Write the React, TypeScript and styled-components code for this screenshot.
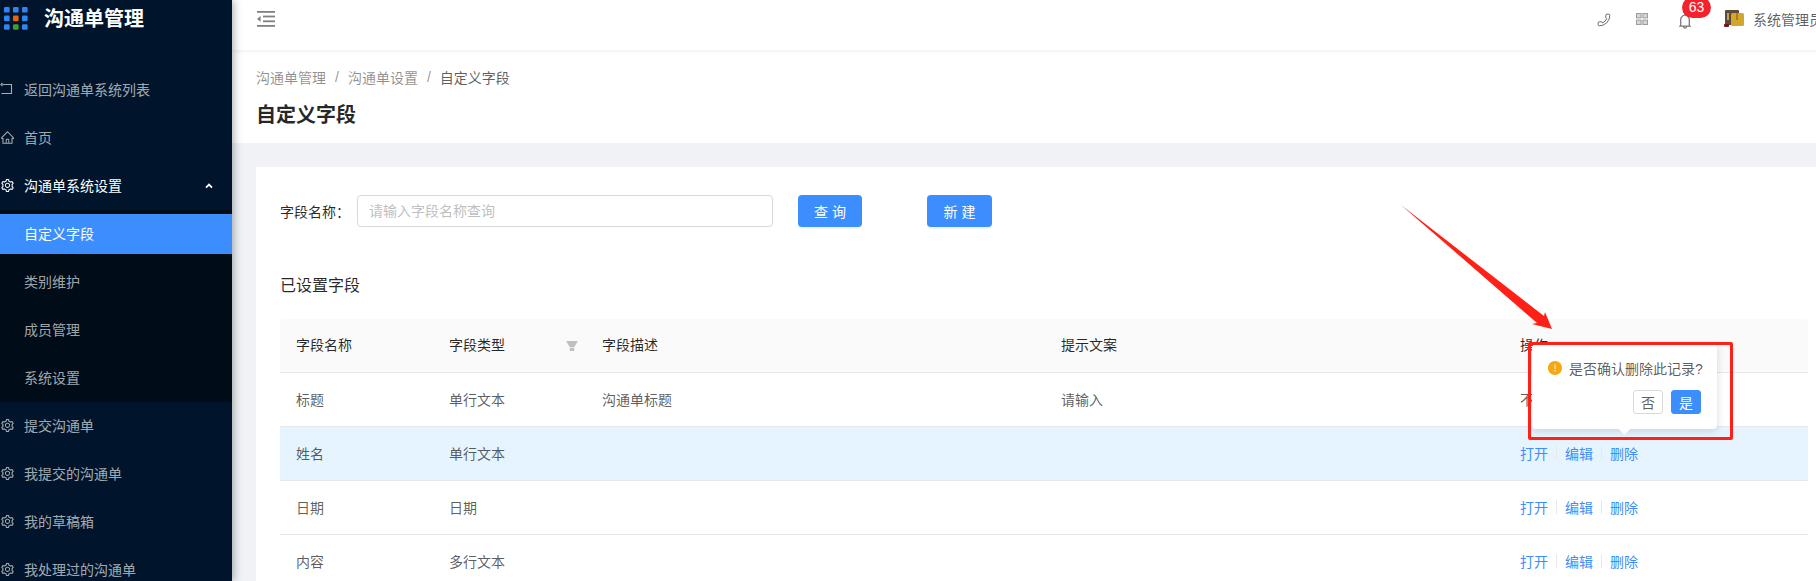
import React from 'react';
import styled, { createGlobalStyle } from 'styled-components';
import {
  AiOutlineHome,
  AiOutlineSetting,
  AiOutlineBell,
  AiFillFilter,
  AiFillExclamationCircle,
} from 'react-icons/ai';
import { Phone } from 'lucide-react';

const FONT = `"Liberation Sans", "Noto Sans CJK SC", sans-serif`;
const BLUE = '#3c8eff';

const GlobalStyle = createGlobalStyle`
  html, body {
    margin: 0;
    padding: 0;
    background: #fff;
    font-family: ${FONT};
  }
  * { box-sizing: border-box; }
`;

const rows = [
  { name: '标题', type: '单行文本', desc: '沟通单标题', hint: '请输入', locked: true },
  { name: '姓名', type: '单行文本', desc: '', hint: '', active: true },
  { name: '日期', type: '日期', desc: '', hint: '' },
  { name: '内容', type: '多行文本', desc: '', hint: '' },
];

const LogoMark = () => (
  <svg width="24" height="24" viewBox="0 0 24 24">
    {[0, 1, 2].map((r) =>
      [0, 1, 2].map((c) => {
        let fill = '#2f86f0';
        if (r === 1 && c === 1) fill = '#e8650f';
        if (r === 2 && c === 1) fill = '#3f9c35';
        return <rect key={`${r}${c}`} x={c * 9} y={r * 8.6} width="5.6" height="5.6" rx="1.2" fill={fill} />;
      })
    )}
  </svg>
);

const BackIcon = () => (
  <svg width="14" height="14" viewBox="0 0 14 14" fill="none" stroke="currentColor" strokeWidth="1.1">
    <path d="M2.5 2.5H11.5V11.5H1.5" />
    <path d="M2.5 1L1 2.5L2.5 4" />
  </svg>
);

const CollapseIcon = () => (
  <svg width="18" height="16" viewBox="0 0 18 16" fill="#808080">
    <rect x="0" y="0" width="18" height="1.8" />
    <rect x="6" y="4.6" width="12" height="1.8" />
    <rect x="6" y="9.4" width="12" height="1.8" />
    <rect x="0" y="14" width="18" height="1.8" />
    <path d="M3.6 5V10.8L0 7.9Z" />
  </svg>
);

const GridIcon = () => (
  <svg width="12" height="12" viewBox="0 0 12 12" fill="#d6d6d6" stroke="#9c9c9c" strokeWidth="1">
    <rect x=".5" y=".5" width="4.6" height="4.4" />
    <rect x="6.9" y=".5" width="4.6" height="4.4" />
    <rect x=".5" y="7.1" width="4.6" height="4.4" />
    <rect x="6.9" y="7.1" width="4.6" height="4.4" />
  </svg>
);

const AvatarIcon = () => (
  <svg width="20" height="18" viewBox="0 0 20 18">
    <rect x="1" y="0" width="14" height="15" rx="1" fill="#5c4a3a" />
    <rect x="3" y="3" width="2" height="7" fill="#c9a24a" />
    <rect x="7" y="3" width="13" height="13" rx="1.5" fill="#d3a62d" />
    <rect x="12" y="3" width="2" height="7" fill="#a87f1c" />
    <rect x="0" y="14" width="5" height="3" rx="1" fill="#7a1212" />
  </svg>
);

const App: React.FC = () => {
  return (
    <Page>
      <GlobalStyle />
      <Sidebar>
        <Logo>
          <LogoMark />
          <LogoText>沟通单管理</LogoText>
        </Logo>
        <MenuItem>
          <MenuIcon><BackIcon /></MenuIcon>
          返回沟通单系统列表
        </MenuItem>
        <MenuItem>
          <MenuIcon><AiOutlineHome size={15} /></MenuIcon>
          首页
        </MenuItem>
        <MenuItem $open>
          <MenuIcon><AiOutlineSetting size={15} /></MenuIcon>
          沟通单系统设置
          <Chevron viewBox="0 0 8 6" width="8" height="6">
            <path d="M1 4.6L4 1.6L7 4.6" fill="none" stroke="#fff" strokeWidth="1.8" />
          </Chevron>
        </MenuItem>
        <SubMenu>
          <SubItem $selected>自定义字段</SubItem>
          <SubItem>类别维护</SubItem>
          <SubItem>成员管理</SubItem>
          <SubItem>系统设置</SubItem>
        </SubMenu>
        {['提交沟通单', '我提交的沟通单', '我的草稿箱', '我处理过的沟通单'].map((label) => (
          <MenuItem key={label}>
            <MenuIcon><AiOutlineSetting size={15} /></MenuIcon>
            {label}
          </MenuItem>
        ))}
      </Sidebar>

      <Main>
        <TopBar>
          <CollapseIcon />
          <TopRight>
            <PhoneWrap><Phone size={14} strokeWidth={1.5} color="#555" /></PhoneWrap>
            <TopItem $gap={25}><GridIcon /></TopItem>
            <BellWrap>
              <AiOutlineBell size={18} color="#777" />
              <Badge>63</Badge>
            </BellWrap>
            <TopItem $gap={30}><AvatarIcon /></TopItem>
            <UserName>系统管理员</UserName>
          </TopRight>
        </TopBar>

        <PageHead>
          <Breadcrumb>
            <span>沟通单管理</span>
            <Slash>/</Slash>
            <span>沟通单设置</span>
            <Slash>/</Slash>
            <CurrentCrumb>自定义字段</CurrentCrumb>
          </Breadcrumb>
          <PageTitle>自定义字段</PageTitle>
        </PageHead>

        <Content>
          <Card>
            <FilterRow>
              <FilterLabel>字段名称：</FilterLabel>
              <SearchInput placeholder="请输入字段名称查询" />
              <PrimaryButton $left={25} $width={64}>查 询</PrimaryButton>
              <PrimaryButton $left={65} $width={65}>新 建</PrimaryButton>
            </FilterRow>
            <SectionTitle>已设置字段</SectionTitle>
            <TableWrap>
              <FieldTable>
                <colgroup>
                  <col style={{ width: 153 }} />
                  <col style={{ width: 153 }} />
                  <col style={{ width: 459 }} />
                  <col style={{ width: 459 }} />
                  <col />
                </colgroup>
                <thead>
                  <tr>
                    <HeadCell>字段名称</HeadCell>
                    <HeadCell>
                      字段类型
                      <FilterIcon><AiFillFilter size={14} /></FilterIcon>
                    </HeadCell>
                    <HeadCell>字段描述</HeadCell>
                    <HeadCell>提示文案</HeadCell>
                    <HeadCell>操作</HeadCell>
                  </tr>
                </thead>
                <tbody>
                  {rows.map((row) => (
                    <BodyRow key={row.name} $active={row.active}>
                      <BodyCell>{row.name}</BodyCell>
                      <BodyCell>{row.type}</BodyCell>
                      <BodyCell>{row.desc}</BodyCell>
                      <BodyCell>{row.hint}</BodyCell>
                      <BodyCell>
                        {row.locked ? (
                          '不可操作'
                        ) : (
                          <Actions>
                            <ActionLink>打开</ActionLink>
                            <ActionDivider />
                            <ActionLink>编辑</ActionLink>
                            <ActionDivider />
                            <ActionLink>删除</ActionLink>
                          </Actions>
                        )}
                      </BodyCell>
                    </BodyRow>
                  ))}
                </tbody>
              </FieldTable>

              <Popconfirm>
                <PopMessage>
                  <WarnIcon><AiFillExclamationCircle size={16} color="#f5a80f" /></WarnIcon>
                  是否确认删除此记录?
                </PopMessage>
                <PopButtons>
                  <PopButton>否</PopButton>
                  <PopButton $primary>是</PopButton>
                </PopButtons>
                <PopArrow />
              </Popconfirm>
            </TableWrap>
          </Card>
        </Content>
      </Main>

      {/* 스크린샷 위에 그려진 표시 */}
      <AnnotationBox />
      <AnnotationArrow width="170" height="135" viewBox="0 0 170 135">
        <path d="M0 0L143 111L144 107L151 124L131 119L136 118Z" fill="#ff2018" />
      </AnnotationArrow>
    </Page>
  );
};

export default App;

const Page = styled.div`
  position: relative;
  display: flex;
  width: 1816px;
  height: 581px;
  overflow: hidden;
  background: #f0f2f5;
`;

const Sidebar = styled.aside`
  flex: 0 0 232px;
  height: 581px;
  overflow: hidden;
  background: #00152b;
  box-shadow: 2px 0 8px rgba(29, 35, 41, 0.35);
  z-index: 2;
`;

const Logo = styled.div`
  display: flex;
  align-items: flex-start;
  gap: 16px;
  height: 66px;
  padding: 7px 0 0 4px;
`;

const LogoText = styled.span`
  font-size: 20px;
  font-weight: 700;
  line-height: 24px;
  color: #fff;
`;

const MenuItem = styled.div<{ $open?: boolean }>`
  position: relative;
  display: flex;
  align-items: center;
  gap: 10px;
  height: 48px;
  padding-bottom: 2px;
  font-size: 14px;
  color: ${({ $open }) => ($open ? '#fff' : 'rgba(255, 255, 255, 0.65)')};
`;

const MenuIcon = styled.span`
  display: flex;
  align-items: center;
  justify-content: center;
  width: 14px;
  height: 16px;

  svg {
    flex-shrink: 0;
  }
`;

const Chevron = styled.svg`
  position: absolute;
  right: 19px;
  top: 21px;
`;

const SubMenu = styled.div`
  display: flex;
  flex-direction: column;
  gap: 8px;
  padding: 4px 0;
  background: #000c17;
`;

const SubItem = styled.div<{ $selected?: boolean }>`
  display: flex;
  align-items: center;
  height: 40px;
  padding: 0 0 2px 24px;
  font-size: 14px;
  color: ${({ $selected }) => ($selected ? '#fff' : 'rgba(255, 255, 255, 0.65)')};
  background: ${({ $selected }) => ($selected ? BLUE : 'transparent')};
`;

const Main = styled.main`
  flex: 1;
  min-width: 0;
  display: flex;
  flex-direction: column;
  height: 581px;
`;

const TopBar = styled.header`
  display: flex;
  align-items: center;
  justify-content: space-between;
  flex: 0 0 50px;
  padding: 0 0 12px 25px;
  overflow: hidden;
  background: #fff;
  box-shadow: 0 1px 4px rgba(0, 21, 41, 0.08);
  z-index: 1;
`;

const TopRight = styled.div`
  display: flex;
  align-items: center;
  margin-right: -7px;
  flex-shrink: 0;
`;

const PhoneWrap = styled.span`
  display: flex;
  margin-top: 2px;
  transform: scaleX(-1);
`;

const TopItem = styled.span<{ $gap: number }>`
  display: flex;
  margin-left: ${({ $gap }) => $gap}px;
`;

const BellWrap = styled.span`
  position: relative;
  display: flex;
  margin-left: 28px;
  margin-top: 3px;
`;

const Badge = styled.span`
  position: absolute;
  left: 6px;
  top: -15px;
  width: 29px;
  height: 21px;
  border-radius: 11px;
  background: #f5222d;
  color: #fff;
  font-size: 14px;
  line-height: 21px;
  text-align: center;
`;

const UserName = styled.span`
  margin-left: 9px;
  font-size: 14px;
  color: rgba(0, 0, 0, 0.65);
  white-space: nowrap;
`;

const PageHead = styled.div`
  flex: 0 0 93px;
  padding: 16px 24px 0;
  background: #fff;
`;

const Breadcrumb = styled.div`
  display: flex;
  align-items: center;
  height: 22px;
  font-size: 14px;
  color: rgba(0, 0, 0, 0.45);
`;

const Slash = styled.span`
  margin: 0 9px;
`;

const CurrentCrumb = styled.span`
  color: rgba(0, 0, 0, 0.65);
`;

const PageTitle = styled.h1`
  margin: 13px 0 0;
  font-size: 20px;
  font-weight: 700;
  line-height: 28px;
  color: rgba(0, 0, 0, 0.85);
`;

const Content = styled.div`
  flex: 1;
  min-height: 0;
  padding: 24px 0 0 24px;
`;

const Card = styled.section`
  height: 100%;
  padding: 28px 8px 0 24px;
  background: #fff;
`;

const FilterRow = styled.div`
  display: flex;
  align-items: center;
  height: 32px;
`;

const FilterLabel = styled.label`
  width: 77px;
  font-size: 14px;
  color: rgba(0, 0, 0, 0.85);
`;

const SearchInput = styled.input`
  width: 416px;
  height: 32px;
  padding: 0 11px;
  border: 1px solid #d9d9d9;
  border-radius: 4px;
  font-family: ${FONT};
  font-size: 14px;
  outline: none;

  &::placeholder {
    color: #bfbfbf;
  }
`;

const PrimaryButton = styled.button<{ $left: number; $width: number }>`
  width: ${({ $width }) => $width}px;
  height: 32px;
  margin-left: ${({ $left }) => $left}px;
  border: none;
  border-radius: 4px;
  background: ${BLUE};
  box-shadow: 0 2px 0 rgba(0, 0, 0, 0.045);
  color: #fff;
  font-family: ${FONT};
  font-size: 14px;
`;

const SectionTitle = styled.h2`
  margin: 47px 0 0;
  font-size: 16px;
  font-weight: 400;
  line-height: 24px;
  color: rgba(0, 0, 0, 0.85);
`;

const TableWrap = styled.div`
  position: relative;
  margin-top: 21px;
`;

const FieldTable = styled.table`
  width: 100%;
  table-layout: fixed;
  border-collapse: separate;
  border-spacing: 0;
  font-size: 14px;
`;

const HeadCell = styled.th`
  position: relative;
  height: 54px;
  padding: 0 16px 4px;
  border-bottom: 1px solid #e8e8e8;
  background: #fafafa;
  color: rgba(0, 0, 0, 0.85);
  font-weight: 400;
  text-align: left;

  &:first-child {
    border-top-left-radius: 4px;
  }
  &:last-child {
    border-top-right-radius: 4px;
  }
`;

const FilterIcon = styled.span`
  position: absolute;
  right: 7px;
  top: 20px;
  display: flex;
  color: #bfbfbf;
`;

const BodyRow = styled.tr<{ $active?: boolean }>`
  background: ${({ $active }) => ($active ? '#e6f4ff' : '#fff')};
`;

const BodyCell = styled.td`
  height: 54px;
  padding: 0 16px 2px;
  border-bottom: 1px solid #e8e8e8;
  color: rgba(0, 0, 0, 0.65);
`;

const Actions = styled.div`
  display: flex;
  align-items: center;
`;

const ActionLink = styled.a`
  color: ${BLUE};
`;

const ActionDivider = styled.span`
  width: 1px;
  height: 14px;
  margin: 0 8px;
  background: #e8e8e8;
`;

const Popconfirm = styled.div`
  position: absolute;
  left: 1252px;
  top: 25px;
  width: 185px;
  height: 85px;
  padding: 16px 16px 0;
  border-radius: 4px;
  background: #fff;
  box-shadow: 0 2px 8px rgba(0, 0, 0, 0.15);
`;

const PopMessage = styled.div`
  display: flex;
  align-items: center;
  gap: 7px;
  height: 16px;
  font-size: 14px;
  white-space: nowrap;
  color: rgba(0, 0, 0, 0.65);
`;

const WarnIcon = styled.span`
  display: flex;
  margin: 0 -1px;
`;

const PopButtons = styled.div`
  display: flex;
  justify-content: flex-end;
  gap: 8px;
  margin-top: 14px;
`;

const PopButton = styled.button<{ $primary?: boolean }>`
  width: 30px;
  height: 24px;
  padding: 0;
  border: 1px solid ${({ $primary }) => ($primary ? BLUE : '#d9d9d9')};
  border-radius: 3px;
  background: ${({ $primary }) => ($primary ? BLUE : '#fff')};
  color: ${({ $primary }) => ($primary ? '#fff' : 'rgba(0, 0, 0, 0.65)')};
  font-family: ${FONT};
  font-size: 14px;
`;

const PopArrow = styled.span`
  position: absolute;
  left: 88px;
  bottom: -4px;
  width: 9px;
  height: 9px;
  background: #fff;
  transform: rotate(45deg);
`;

const AnnotationBox = styled.div`
  position: absolute;
  left: 1528px;
  top: 342px;
  width: 205px;
  height: 98px;
  border: 3px solid #ff2018;
  border-radius: 2px;
  pointer-events: none;
  z-index: 5;
`;

const AnnotationArrow = styled.svg`
  position: absolute;
  left: 1401px;
  top: 205px;
  pointer-events: none;
  z-index: 5;
`;
